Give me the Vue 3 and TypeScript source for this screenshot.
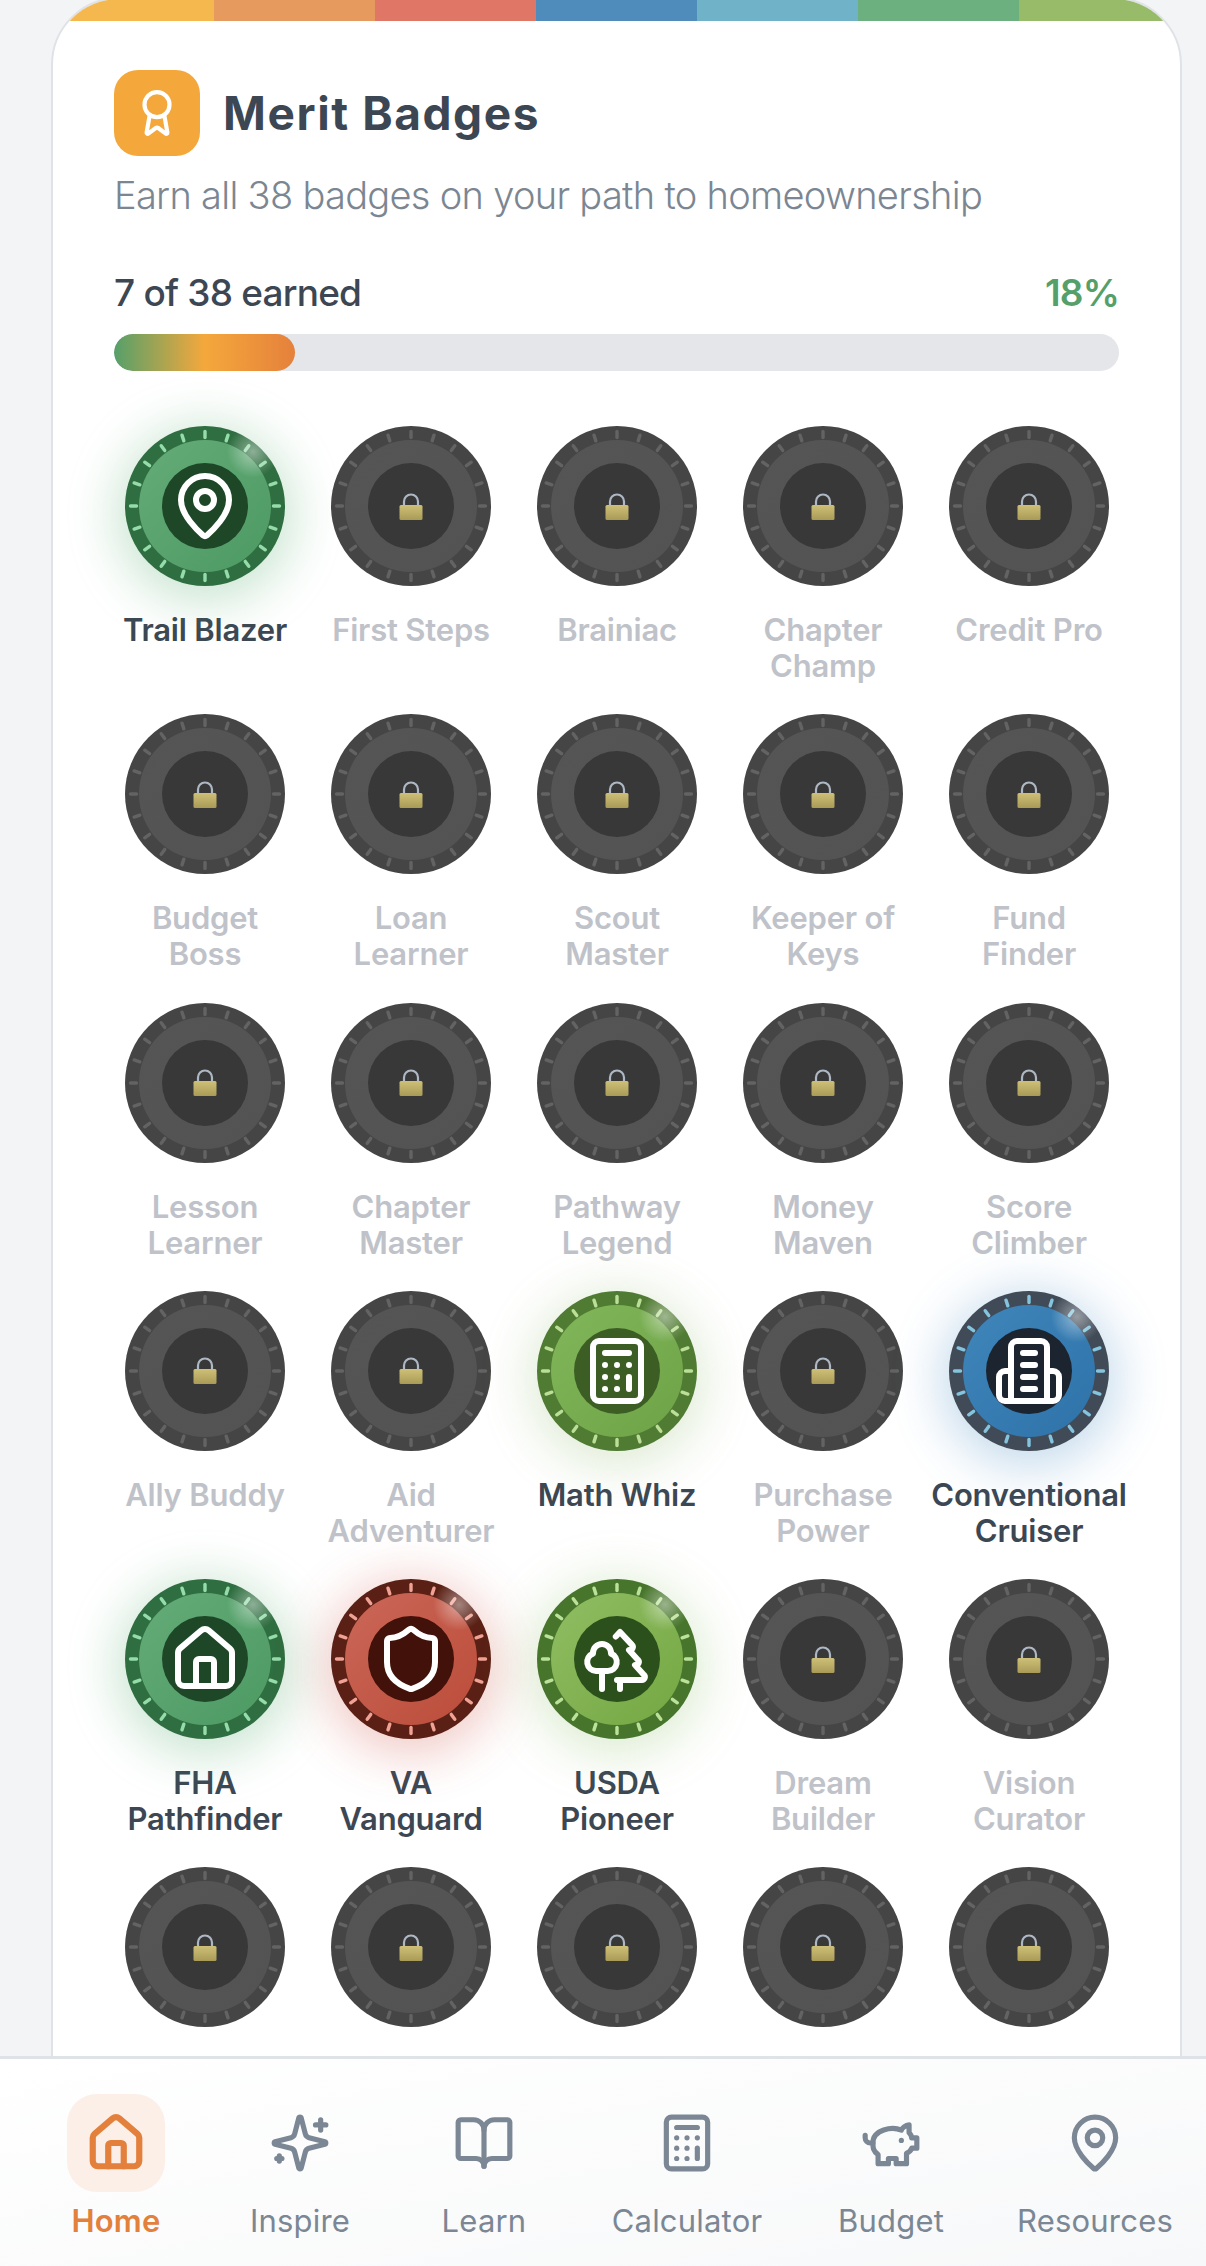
<template>
  <div class="screen">
    <main class="scroll">
      <section class="card">
        <div class="stripes">
          <span v-for="c in stripes" :key="c" :style="{ background: c }"></span>
        </div>
        <div class="body">
          <header class="head">
            <div class="head-icon">
              <svg viewBox="0 0 24 24" class="ico award">
                <path v-for="d in icons.award" :key="d" :d="d" />
              </svg>
            </div>
            <h1>Merit Badges</h1>
          </header>
          <p class="sub">Earn all 38 badges on your path to homeownership</p>

          <div class="progress-row">
            <span class="count">7 of 38 earned</span>
            <span class="pct">18%</span>
          </div>
          <div class="bar"><div class="fill" :style="{ width: '18%' }"></div></div>

          <div class="grid">
            <div v-for="(b, i) in badges" :key="i" class="item">
              <div class="disc" :class="{ earned: b.tone }" :style="toneVars(b.tone)">
                <svg viewBox="0 0 160 160" class="ticks">
                  <line
                    v-for="a in ticks"
                    :key="a"
                    x1="80"
                    y1="5.5"
                    x2="80"
                    y2="11.5"
                    :transform="`rotate(${a} 80 80)`"
                  />
                </svg>
                <div class="mid">
                  <div class="core">
                    <svg v-if="b.icon" viewBox="0 0 24 24" class="ico big">
                      <path v-for="d in icons[b.icon]" :key="d" :d="d" />
                    </svg>
                    <svg v-else viewBox="0 0 24 27" class="lock">
                      <defs>
                        <linearGradient id="brass" x1="0" y1="0" x2="0" y2="1">
                          <stop offset="0" stop-color="#cfc078" />
                          <stop offset="1" stop-color="#a99a56" />
                        </linearGradient>
                      </defs>
                      <path d="M5 13V8.5a7 7 0 0 1 14 0V13" class="shackle" />
                      <rect x="0.5" y="12" width="23" height="15" rx="1.5" fill="url(#brass)" />
                    </svg>
                  </div>
                </div>
                <div v-if="b.tone" class="shine"></div>
              </div>
              <div class="label" :class="{ on: b.tone }">
                <span v-for="l in b.lines" :key="l">{{ l }}</span>
              </div>
            </div>
          </div>
        </div>
      </section>
    </main>

    <nav class="nav">
      <div v-for="n in nav" :key="n.label" class="nav-item" :class="{ active: n.active }">
        <div class="nav-icon">
          <svg viewBox="0 0 24 24" class="ico">
            <path v-for="d in icons[n.icon]" :key="d" :d="d" />
          </svg>
        </div>
        <span>{{ n.label }}</span>
      </div>
    </nav>
  </div>
</template>

<script setup lang="ts">
type Tone = 'forest' | 'moss' | 'blue' | 'red' | 'lime'

interface Badge {
  lines: string[]
  tone?: Tone
  icon?: string
}

const icons: Record<string, string[]> = {
  award: [
    'M15.477 12.89l1.515 8.526a.5.5 0 0 1-.81.47l-3.58-2.687a1 1 0 0 0-1.197 0l-3.586 2.686a.5.5 0 0 1-.81-.469l1.514-8.526',
    'M18 8a6 6 0 1 1-12 0 6 6 0 0 1 12 0z',
  ],
  pin: [
    'M20 10c0 4.993-5.539 10.193-7.399 11.799a1 1 0 0 1-1.202 0C9.539 20.193 4 14.993 4 10a8 8 0 0 1 16 0',
    'M15 10a3 3 0 1 1-6 0 3 3 0 0 1 6 0z',
  ],
  house: [
    'M15 21v-8a1 1 0 0 0-1-1h-4a1 1 0 0 0-1 1v8',
    'M3 10a2 2 0 0 1 .709-1.528l7-5.999a2 2 0 0 1 2.582 0l7 5.999A2 2 0 0 1 21 10v9a2 2 0 0 1-2 2H5a2 2 0 0 1-2-2z',
  ],
  shield: [
    'M20 13c0 5-3.5 7.5-7.66 8.95a1 1 0 0 1-.67-.01C7.5 20.5 4 18 4 13V6a1 1 0 0 1 1-1c2 0 4.5-1.2 6.24-2.72a1.17 1.17 0 0 1 1.52 0C14.51 3.81 17 5 19 5a1 1 0 0 1 1 1z',
  ],
  calc: [
    'M6 2h12a2 2 0 0 1 2 2v16a2 2 0 0 1-2 2H6a2 2 0 0 1-2-2V4a2 2 0 0 1 2-2z',
    'M8 6h8',
    'M16 14v4',
    'M16 10h.01',
    'M12 10h.01',
    'M8 10h.01',
    'M12 14h.01',
    'M8 14h.01',
    'M12 18h.01',
    'M8 18h.01',
  ],
  building: [
    'M6 22V4a2 2 0 0 1 2-2h8a2 2 0 0 1 2 2v18Z',
    'M6 12H4a2 2 0 0 0-2 2v6a2 2 0 0 0 2 2h2',
    'M18 12h2a2 2 0 0 1 2 2v6a2 2 0 0 1-2 2h-2',
    'M10 6h4',
    'M10 10h4',
    'M10 14h4',
    'M10 18h4',
  ],
  trees: [
    'M10 10v.2A3 3 0 0 1 8.9 16H5a3 3 0 0 1-1-5.8V10a3 3 0 0 1 6 0Z',
    'M7 16v6',
    'M13 19v3',
    'M12 19h8.3a1 1 0 0 0 .7-1.7L18 14h.3a1 1 0 0 0 .7-1.7L16 9h.2a1 1 0 0 0 .8-1.7L13 3l-1.4 1.5',
  ],
  sparkles: [
    'M9.937 15.5A2 2 0 0 0 8.5 14.063l-6.135-1.582a.5.5 0 0 1 0-.962L8.5 9.936A2 2 0 0 0 9.937 8.5l1.582-6.135a.5.5 0 0 1 .963 0L14.063 8.5A2 2 0 0 0 15.5 9.937l6.135 1.581a.5.5 0 0 1 0 .964L15.5 14.063a2 2 0 0 0-1.437 1.437l-1.582 6.135a.5.5 0 0 1-.963 0z',
    'M20 3v4',
    'M22 5h-4',
    'M4 17v2',
    'M5 18H3',
  ],
  book: [
    'M12 7v14',
    'M3 18a1 1 0 0 1-1-1V4a1 1 0 0 1 1-1h5a4 4 0 0 1 4 4 4 4 0 0 1 4-4h5a1 1 0 0 1 1 1v13a1 1 0 0 1-1 1h-6a3 3 0 0 0-3 3 3 3 0 0 0-3-3z',
  ],
  piggy: [
    'M19 5c-1.5 0-2.8 1.4-3 2-3.5-1.5-11-.3-11 5 0 1.8 0 3 2 4.5V20h4v-2h3v2h4v-4c1-.5 1.7-1 2-2h2v-4h-2c0-1-.5-1.5-1-2V5z',
    'M2 9v1c0 1.1.9 2 2 2h1',
    'M16 11h.01',
  ],
}

const stripes = ['#f4b84f', '#e79a5e', '#e07766', '#4f8cbb', '#70b3c9', '#6cb080', '#97bb68']

const ticks = Array.from({ length: 20 }, (_, i) => i * 18)

const tones: Record<Tone, string[]> = {
  // outer, mid light, mid dark, core, tick, glow
  forest: ['#2f6e40', '#64ab78', '#4d9a63', '#1d4727', '#95dcab', 'rgba(85,170,110,.32)'],
  moss: ['#507b33', '#82b65a', '#6da346', '#3c5e24', '#bcdf97', 'rgba(120,170,80,.24)'],
  blue: ['#414b57', '#3f86bb', '#2e72a8', '#1c2430', '#84c4df', 'rgba(70,140,195,.32)'],
  red: ['#5a2015', '#cb6758', '#bb4c39', '#421109', '#f0a294', 'rgba(205,80,65,.3)'],
  lime: ['#47752c', '#90bd63', '#74a742', '#2b501b', '#bce29a', 'rgba(125,180,80,.26)'],
}

const toneVars = (t?: Tone) => {
  if (!t) return {}
  const [outer, light, dark, core, tick, glow] = tones[t]
  return {
    '--outer': outer,
    '--light': light,
    '--dark': dark,
    '--core': core,
    '--tick': tick,
    '--glow': glow,
  }
}

const badges: Badge[] = [
  { lines: ['Trail Blazer'], tone: 'forest', icon: 'pin' },
  { lines: ['First Steps'] },
  { lines: ['Brainiac'] },
  { lines: ['Chapter', 'Champ'] },
  { lines: ['Credit Pro'] },
  { lines: ['Budget', 'Boss'] },
  { lines: ['Loan', 'Learner'] },
  { lines: ['Scout', 'Master'] },
  { lines: ['Keeper of', 'Keys'] },
  { lines: ['Fund', 'Finder'] },
  { lines: ['Lesson', 'Learner'] },
  { lines: ['Chapter', 'Master'] },
  { lines: ['Pathway', 'Legend'] },
  { lines: ['Money', 'Maven'] },
  { lines: ['Score', 'Climber'] },
  { lines: ['Ally Buddy'] },
  { lines: ['Aid', 'Adventurer'] },
  { lines: ['Math Whiz'], tone: 'moss', icon: 'calc' },
  { lines: ['Purchase', 'Power'] },
  { lines: ['Conventional', 'Cruiser'], tone: 'blue', icon: 'building' },
  { lines: ['FHA', 'Pathfinder'], tone: 'forest', icon: 'house' },
  { lines: ['VA', 'Vanguard'], tone: 'red', icon: 'shield' },
  { lines: ['USDA', 'Pioneer'], tone: 'lime', icon: 'trees' },
  { lines: ['Dream', 'Builder'] },
  { lines: ['Vision', 'Curator'] },
  { lines: [] },
  { lines: [] },
  { lines: [] },
  { lines: [] },
  { lines: [] },
]

const nav = [
  { label: 'Home', icon: 'house', active: true },
  { label: 'Inspire', icon: 'sparkles' },
  { label: 'Learn', icon: 'book' },
  { label: 'Calculator', icon: 'calc' },
  { label: 'Budget', icon: 'piggy' },
  { label: 'Resources', icon: 'pin' },
]
</script>

<style>
html,
body {
  margin: 0;
  background: #f3f4f6;
}
</style>

<style scoped>
.screen {
  width: 1206px;
  height: 2266px;
  display: flex;
  flex-direction: column;
  overflow: hidden;
  background: #f3f4f6;
  font-family: Inter, 'Noto Sans', sans-serif;
}

.scroll {
  flex: 1;
  min-height: 0;
  overflow: hidden;
  padding: 0 24px 0 51px;
}

.card {
  margin-top: -3px;
  background: #fff;
  border: 2px solid #dfe2e7;
  border-radius: 68px;
  overflow: hidden;
}

.stripes {
  display: flex;
  height: 22px;
}

.stripes span {
  flex: 1;
}

.body {
  padding: 49px 61px 0;
}

.head {
  display: flex;
  align-items: center;
  gap: 23px;
}

.head-icon {
  width: 86px;
  height: 86px;
  border-radius: 24px;
  background: #f4a83c;
  display: flex;
  align-items: center;
  justify-content: center;
}

.ico {
  fill: none;
  stroke: currentColor;
  stroke-width: 2;
  stroke-linecap: round;
  stroke-linejoin: round;
}

.award {
  width: 50px;
  height: 50px;
  color: #fff;
}

h1 {
  margin: 0;
  font-size: 46px;
  line-height: 56px;
  font-weight: 700;
  color: #3c4753;
  letter-spacing: 1.6px;
}

.sub {
  margin: 17px 0 0;
  font-size: 38px;
  line-height: 44px;
  font-weight: 300;
  color: #7b8692;
  letter-spacing: -0.7px;
}

.progress-row {
  margin-top: 54px;
  display: flex;
  justify-content: space-between;
  align-items: center;
  font-size: 37px;
  line-height: 44px;
  font-weight: 500;
  letter-spacing: -0.8px;
}

.count {
  color: #3c4753;
}

.pct {
  color: #55a06a;
  font-weight: 600;
}

.bar {
  margin-top: 19px;
  height: 37px;
  border-radius: 19px;
  background: #e4e6ea;
  overflow: hidden;
}

.fill {
  height: 100%;
  border-radius: 19px;
  background: linear-gradient(90deg, #55a06a 0%, #f4a83c 50%, #e5813b 100%);
}

.grid {
  margin: 55px -12px 0 -12px;
  display: grid;
  grid-template-columns: repeat(5, 206px);
  row-gap: 30.3px;
}

.item {
  display: flex;
  flex-direction: column;
  align-items: center;
  height: 258px;
}

.disc {
  --outer: #454545;
  --light: #555555;
  --dark: #535353;
  --core: #383838;
  --tick: #636363;
  --glow: transparent;
  position: relative;
  width: 160px;
  height: 160px;
  flex: none;
  border-radius: 50%;
  background: var(--outer);
  display: flex;
  align-items: center;
  justify-content: center;
}

.disc.earned {
  box-shadow: 0 8px 50px 8px var(--glow);
}

.ticks {
  position: absolute;
  inset: 0;
  width: 160px;
  height: 160px;
  stroke: var(--tick);
  stroke-width: 3.4;
  stroke-linecap: round;
}

.mid {
  width: 132px;
  height: 132px;
  border-radius: 50%;
  background: linear-gradient(135deg, var(--light), var(--dark));
  display: flex;
  align-items: center;
  justify-content: center;
  position: relative;
}

.core {
  width: 86px;
  height: 86px;
  border-radius: 50%;
  background: var(--core);
  display: flex;
  align-items: center;
  justify-content: center;
}

.big {
  width: 72px;
  height: 72px;
  flex: none;
  color: #fff;
}

.lock {
  width: 24px;
  height: 27px;
}

.shackle {
  fill: none;
  stroke: #aeb8c4;
  stroke-width: 2.2;
}

.shine {
  position: absolute;
  inset: 0;
  border-radius: 50%;
  background: radial-gradient(circle at 80% 16%, rgba(255, 255, 255, 0.45), rgba(255, 255, 255, 0) 14%);
}

.label {
  margin-top: 26px;
  display: flex;
  flex-direction: column;
  align-items: center;
  font-size: 31px;
  line-height: 36px;
  font-weight: 600;
  letter-spacing: -0.2px;
  color: #bfc3c9;
  white-space: nowrap;
}

.label.on {
  color: #3c4753;
}

.nav {
  flex: none;
  height: 210px;
  box-sizing: border-box;
  border-top: 3px solid #dfe2e7;
  padding: 35px 0 0 24px;
  display: grid;
  grid-template-columns: 184px 184px 184px 222px 186px 222px;
  background: linear-gradient(170deg, #ffffff, #f7f8f9);
  width: 1206px;
}

.nav-item {
  display: flex;
  flex-direction: column;
  align-items: center;
  gap: 10px;
  font-size: 31px;
  line-height: 38px;
  letter-spacing: 0.2px;
  color: #7b8794;
  white-space: nowrap;
}

.nav-item.active {
  color: #e2803c;
  font-weight: 600;
}

.nav-icon {
  width: 98px;
  height: 98px;
  border-radius: 30px;
  display: flex;
  align-items: center;
  justify-content: center;
}

.nav-item.active .nav-icon {
  background: #fbefe8;
}

.nav-item.active .ico {
  stroke-width: 2.4;
}

.nav-icon svg {
  width: 62px;
  height: 62px;
}
</style>
